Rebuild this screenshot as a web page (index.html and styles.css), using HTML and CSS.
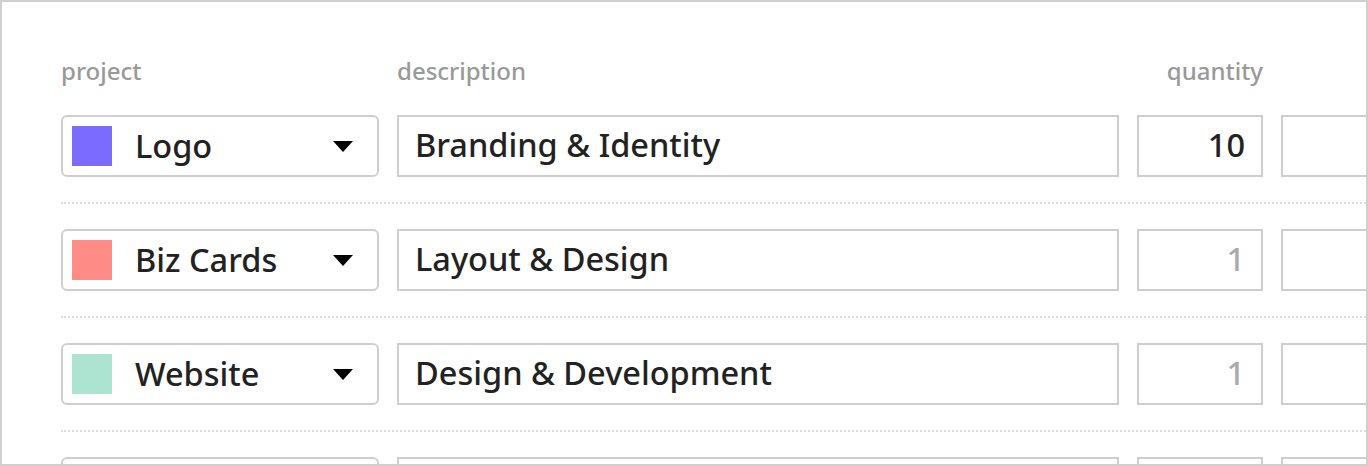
FILE: index.html
```html
<!DOCTYPE html>
<html lang="en">
<head>
  <meta charset="UTF-8" />
  <title>Invoice items</title>
  <link rel="stylesheet" href="styles.css">
</head>
<body>
  <div class="sheet">
    <div class="line head">
      <div class="label">project</div>
      <div class="label">description</div>
      <div class="label right">quantity</div>
      <div class="label"></div>
    </div>

    <div class="line item">
      <div class="select">
        <span class="swatch purple"></span>
        <span class="select-name">Logo</span>
        <span class="caret"></span>
      </div>
      <div class="field">Branding &amp; Identity</div>
      <div class="field num">10</div>
      <div class="field"></div>
    </div>

    <div class="line item">
      <div class="select">
        <span class="swatch coral"></span>
        <span class="select-name">Biz Cards</span>
        <span class="caret"></span>
      </div>
      <div class="field">Layout &amp; Design</div>
      <div class="field num muted">1</div>
      <div class="field"></div>
    </div>

    <div class="line item">
      <div class="select">
        <span class="swatch mint"></span>
        <span class="select-name">Website</span>
        <span class="caret"></span>
      </div>
      <div class="field">Design &amp; Development</div>
      <div class="field num muted">1</div>
      <div class="field"></div>
    </div>

    <div class="line item">
      <div class="select"></div>
      <div class="field"></div>
      <div class="field num"></div>
      <div class="field"></div>
    </div>
  </div>
</body>
</html>
```

FILE: styles.css
```css
body {
  margin: 0;
  background: #fff;
  font-family: 'Noto Sans', sans-serif;
  color: #222;
}

.sheet {
  height: 466px;
  box-sizing: border-box;
  border: 2px solid #cfcfcf;
  overflow: hidden;
  padding-left: 59px;
}

.line {
  display: grid;
  grid-template-columns: 318px 722px 126px 200px;
  column-gap: 18px;
  width: max-content;
}

.head {
  padding-top: 54px;
  height: 34px;
}

.label {
  font-size: 24px;
  font-weight: 500;
  line-height: 30px;
  color: #999;
}

.label.right {
  text-align: right;
}

.item {
  padding: 25px 0;
  border-bottom: 2px dotted #ddd;
}

.select,
.field {
  height: 62px;
  box-sizing: border-box;
  border: 2px solid #cfcfcf;
  font-size: 32.5px;
  font-weight: 500;
  line-height: 56px;
}

.select {
  border-radius: 6px;
  display: flex;
  align-items: center;
  padding: 0 24px 0 9px;
}

.swatch {
  width: 40px;
  height: 40px;
  flex: none;
}

.swatch.purple { background: #7b6cff; }
.swatch.coral { background: #ff8c87; }
.swatch.mint { background: #ade3d1; }

.select-name {
  flex: 1;
  margin-left: 23px;
}

.caret {
  width: 0;
  height: 0;
  border-left: 10px solid transparent;
  border-right: 10px solid transparent;
  border-top: 11px solid #000;
}

.field {
  padding: 0 16px;
}

.num {
  text-align: right;
  padding-right: 16px;
}

.muted {
  color: #aaa;
}
```
